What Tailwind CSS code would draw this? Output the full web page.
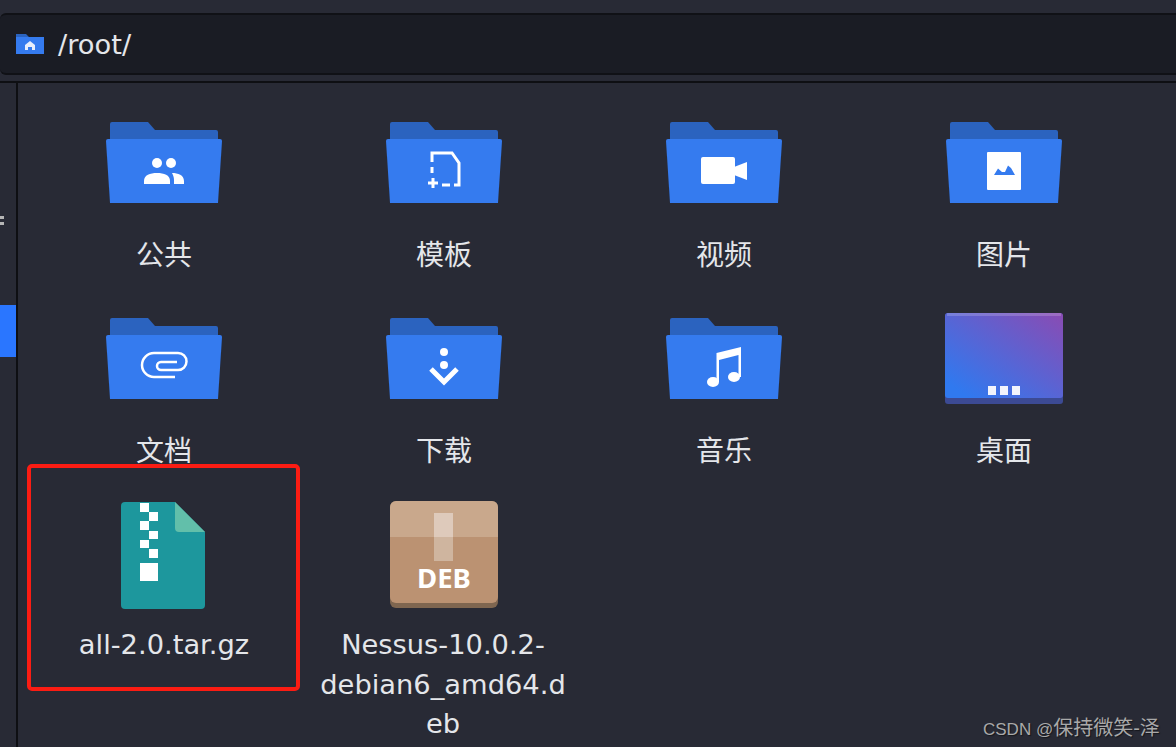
<!DOCTYPE html>
<html lang="zh-CN">
<head>
    <meta charset="UTF-8">
    <title>/root/</title>
    <script src="https://cdn.jsdelivr.net/npm/@tailwindcss/browser@4"></script>
</head>
<body class="bg-[#282a35] text-[#e4e6ea] font-['DejaVu_Sans','Noto_Sans_CJK_SC',sans-serif] overflow-hidden">
    <svg class="absolute w-0 h-0">
        <symbol id="folder" viewBox="0 0 120 88">
            <path d="M6 4 a2 2 0 0 1 2-2 H44 L51 10 H112 a2 2 0 0 1 2 2 V40 H6z" fill="#2b63bf"/>
            <path d="M2 21 a2 2 0 0 1 2-2 H116 a2 2 0 0 1 2 2 L114 83 H6z" fill="#357bef"/>
        </symbol>
    </svg>

    <div class="relative w-[1176px] h-[747px] overflow-hidden">
        <!-- top bar + location -->
        <div class="h-[83px] border-b-2 border-[#0e0f13] pt-[13px]">
            <div class="h-[62px] flex items-center gap-[14px] pl-[16px] bg-[#1a1c24] border-y-2 border-[#101116] rounded-l-md">
                <svg class="w-[28px] h-[20px]" viewBox="0 0 28 20">
                    <path d="M0 0 H10 L13 3 H28 V8 H0z" fill="#2b63bf"/>
                    <rect y="3" width="28" height="17" fill="#357bef"/>
                    <path d="M14 7 L19 11 V16 H16 V13 H12 V16 H9 V11z" fill="#e8eefc"/>
                </svg>
                <span class="pt-[2px] text-[27.3px] leading-none">/root/</span>
            </div>
        </div>

        <div class="flex h-[664px]">
            <!-- sidebar strip -->
            <aside class="relative w-[18px] shrink-0 border-r-2 border-[#0e0f13]">
                <div class="absolute left-0 top-[133px] w-[4px] h-[3px] bg-[#b5b5b5]"></div>
                <div class="absolute left-0 top-[139px] w-[4px] h-[3px] bg-[#b5b5b5]"></div>
                <div class="absolute left-0 top-[222px] w-[16px] h-[52px] bg-[#2a76ff]"></div>
            </aside>

            <main class="pl-[6px] pt-[37px] grid grid-cols-[repeat(4,280px)] grid-rows-[196px_184px_auto] justify-start">
                <div class="flex flex-col items-center">
                    <svg class="w-[120px] h-[88px]" viewBox="0 0 120 88">
                        <use href="#folder"/>
                        <g fill="#fff">
                            <circle cx="53" cy="43" r="5"/><circle cx="67" cy="43" r="5"/>
                            <path d="M40 64 v-3 c0-6 6-8 13-8 s13 2 13 8 v3z"/>
                            <path d="M68 53 c6 0 12 2 12 8 v3 h-10 v-4 c0-3-1-5-2-7z"/>
                        </g>
                    </svg>
                    <span class="mt-[28px] text-[28px] leading-[40px]">公共</span>
                </div>
                <div class="flex flex-col items-center">
                    <svg class="w-[120px] h-[88px]" viewBox="0 0 120 88">
                        <use href="#folder"/>
                        <g fill="none" stroke="#fff" stroke-width="3">
                            <path d="M48 42 V33 H68 L75 43 V65 H70"/>
                            <path d="M58 65 H66"/>
                            <path d="M48 47 V53"/>
                            <path d="M49 58 V68 M44 63 H54"/>
                        </g>
                    </svg>
                    <span class="mt-[28px] text-[28px] leading-[40px]">模板</span>
                </div>
                <div class="flex flex-col items-center">
                    <svg class="w-[120px] h-[88px]" viewBox="0 0 120 88">
                        <use href="#folder"/>
                        <rect x="37" y="37" width="34" height="27" rx="2" fill="#fff"/>
                        <path d="M70 47 L83 42 V60 L70 55z" fill="#fff"/>
                    </svg>
                    <span class="mt-[28px] text-[28px] leading-[40px]">视频</span>
                </div>
                <div class="flex flex-col items-center">
                    <svg class="w-[120px] h-[88px]" viewBox="0 0 120 88">
                        <use href="#folder"/>
                        <rect x="43" y="32" width="34" height="38" rx="1" fill="#fff"/>
                        <path d="M50 55 L54 48.5 L58 52 L61 52 L64 45.5 L67 48 L71 55z" fill="#357bef"/>
                    </svg>
                    <span class="mt-[28px] text-[28px] leading-[40px]">图片</span>
                </div>

                <div class="flex flex-col items-center">
                    <svg class="w-[120px] h-[88px]" viewBox="0 0 120 88">
                        <use href="#folder"/>
                        <path d="M71 61 H50 a12 12 0 0 1 0-24 H74 a8.5 8.5 0 0 1 0 17 H57 a4 4 0 0 1 0-8 H73" fill="none" stroke="#fff" stroke-width="2.5"/>
                    </svg>
                    <span class="mt-[28px] text-[28px] leading-[40px]">文档</span>
                </div>
                <div class="flex flex-col items-center">
                    <svg class="w-[120px] h-[88px]" viewBox="0 0 120 88">
                        <use href="#folder"/>
                        <circle cx="60" cy="36" r="4" fill="#fff"/>
                        <circle cx="60" cy="49" r="4" fill="#fff"/>
                        <path d="M47 53 L60 66 L73 53" fill="none" stroke="#fff" stroke-width="5"/>
                    </svg>
                    <span class="mt-[28px] text-[28px] leading-[40px]">下载</span>
                </div>
                <div class="flex flex-col items-center">
                    <svg class="w-[120px] h-[88px]" viewBox="0 0 120 88">
                        <use href="#folder"/>
                        <g fill="#fff">
                            <ellipse cx="49" cy="66" rx="6" ry="5"/>
                            <ellipse cx="70" cy="61" rx="6" ry="5"/>
                            <path d="M52.5 66 V37 L77 31 V61 H74.5 V39 L55 44 V66z"/>
                        </g>
                    </svg>
                    <span class="mt-[28px] text-[28px] leading-[40px]">音乐</span>
                </div>
                <div class="flex flex-col items-center">
                    <svg class="w-[120px] h-[88px] overflow-visible" viewBox="0 0 120 88">
                        <defs>
                            <linearGradient id="desk" x1="0" y1="1" x2="1" y2="0">
                                <stop offset="0.1" stop-color="#3079ef"/>
                                <stop offset="1" stop-color="#8a4bb3"/>
                            </linearGradient>
                        </defs>
                        <rect x="1" y="-3" width="118" height="91" rx="3" fill="#3c4a94"/>
                        <rect x="1" y="-3" width="118" height="85" rx="3" fill="url(#desk)"/>
                        <rect x="3" y="-3" width="114" height="3" fill="#fff" fill-opacity="0.18"/>
                        <g fill="#f2f4fc">
                            <rect x="44" y="70" width="8" height="9"/>
                            <rect x="56" y="70" width="8" height="9"/>
                            <rect x="68" y="70" width="8" height="9"/>
                        </g>
                    </svg>
                    <span class="mt-[28px] text-[28px] leading-[40px]">桌面</span>
                </div>

                <div class="flex flex-col items-center">
                    <svg class="w-[120px] h-[112px]" viewBox="0 0 120 112">
                        <path d="M17 6 a4 4 0 0 1 4-4 H71 L101 32 V105 a4 4 0 0 1-4 4 H21 a4 4 0 0 1-4-4z" fill="#1d979d"/>
                        <path d="M71 2 L101 32 H75 a4 4 0 0 1-4-4z" fill="#62bfaa"/>
                        <g fill="#fff">
                            <rect x="36" y="3" width="9" height="9"/>
                            <rect x="45" y="12" width="9" height="9"/>
                            <rect x="36" y="21" width="9" height="9"/>
                            <rect x="45" y="31" width="9" height="8"/>
                            <rect x="36" y="40" width="9" height="8"/>
                            <rect x="45" y="49" width="9" height="9"/>
                            <rect x="36" y="63" width="18" height="18"/>
                        </g>
                    </svg>
                    <span class="mt-[13px] text-[27.3px] leading-[40px]">all-2.0.tar.gz</span>
                </div>
                <div class="flex flex-col items-center">
                    <svg class="w-[120px] h-[112px]" viewBox="0 0 120 112">
                        <rect x="6" y="1" width="108" height="107" rx="6" fill="#7f6650"/>
                        <path d="M6 37 H114 V97 a6 6 0 0 1-6 6 H12 a6 6 0 0 1-6-6z" fill="#bb9272"/>
                        <path d="M6 37 V7 a6 6 0 0 1 6-6 H108 a6 6 0 0 1 6 6 V37z" fill="#c9a88c"/>
                        <rect x="50" y="13" width="19" height="24" fill="#decabb"/>
                        <rect x="50" y="37" width="19" height="24" fill="#cfb59f"/>
                        <text x="60" y="88" text-anchor="middle" fill="#fff" font-size="27.5" font-weight="700" font-family="Noto Sans">DEB</text>
                    </svg>
                    <span class="mt-[13px] -ml-[2px] w-[246px] text-center text-[27.3px] leading-[39.5px] wrap-anywhere">Nessus-10.0.2-debian6_amd64.deb</span>
                </div>
            </main>
        </div>

        <!-- annotation + watermark sit on top of the screenshot -->
        <div class="absolute left-[27px] top-[464px] w-[273px] h-[227px] border-4 border-[#fb1c13] rounded-[5px]"></div>
        <div class="absolute left-[983px] top-[715px] text-[17px] leading-[26px] text-[#a9a9a9] [text-shadow:1px_1px_1px_#16171c] font-['Liberation_Sans','Noto_Sans_CJK_SC',sans-serif]">CSDN @<span class="text-[20px]">保持微笑-泽</span></div>
    </div>
</body>
</html>
